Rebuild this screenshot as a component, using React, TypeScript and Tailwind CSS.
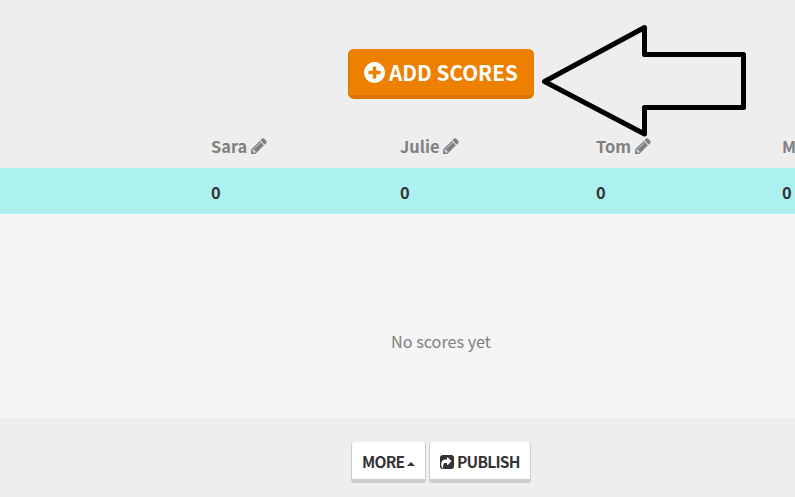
import React from "react";

function Icon({ d, className, box = "128 128 1536 1536" }: { d: string; className: string; box?: string }) {
  return (
    <svg viewBox={box} className={`shrink-0 ${className}`} fill="currentColor" fillRule="evenodd" aria-hidden="true">
      <path d={d} />
    </svg>
  );
}

const PLUS =
  "M1344 960v-128q0-26-19-45t-45-19h-256v-256q0-26-19-45t-45-19h-128q-26 0-45 19t-19 45v256h-256q-26 0-45 19t-19 45v128q0 26 19 45t45 19h256v256q0 26 19 45t45 19h128q26 0 45-19t19-45v-256h256q26 0 45-19t19-45zM1664 896q0 209-103 385.5t-279.5 279.5-385.5 103-385.5-103-279.5-279.5-103-385.5 103-385.5 279.5-279.5 385.5-103 385.5 103 279.5 279.5 103 385.5z";
const PENCIL =
  "M491 1536l91-91-235-235-91 91v107h128v128h107zM1014 608q0-22-22-22-10 0-17 7l-542 542q-7 7-7 17 0 22 22 22 10 0 17-7l542-542q7-7 7-17zM960 416l416 416-832 832h-416v-416zM1643 512q0 53-37 90l-166 166-416-416 166-165q36-38 90-38 53 0 91 38l235 234q37 39 37 91z";
const SHARE =
  "M1005 1197l352-352q19-19 19-45t-19-45l-352-352q-30-31-69-14-40 17-40 59v160q-119 0-216 19.5t-162.5 51-114 79-76.5 95.5-44.5 109-21.5 111.5-5 110.5q0 181 167 404 11 12 25 12 7 0 13-3 22-9 19-33-44-354 62-473 46-52 130-75.5t224-23.5v160q0 42 40 59 12 5 24 5 26 0 45-19zM1664 416v960q0 119-84.5 203.5t-203.5 84.5h-960q-119 0-203.5-84.5t-84.5-203.5v-960q0-119 84.5-203.5t203.5-84.5h960q119 0 203.5 84.5t84.5 203.5z";

const players = ["Sara", "Julie", "Tom", "M"];

export default function App() {
  return (
    <div className="relative flex h-[497px] w-full flex-col overflow-hidden bg-[#eeeeee] font-['Noto_Sans_CJK_SC','Noto_Sans',sans-serif] text-[#333333]">
      <header className="flex h-[126px] shrink-0 items-start pt-[49px] pl-[348px]">
        <button className="flex h-[50px] w-[186px] items-center gap-1 rounded-[6px] border-b-4 border-[#d97500] bg-[#ed8000] pl-4 text-[20.7px] font-bold whitespace-nowrap text-white shadow-[inset_-1px_0_0_#dc7700,inset_1px_0_0_#dc7700]">
          <Icon d={PLUS} className="size-[21px]" />
          <span className="pt-[2px]">ADD SCORES</span>
        </button>
      </header>

      <div className="grid h-[42px] shrink-0 grid-cols-[189px_196px_186px_13px] items-center pb-[2px] pl-[211px] text-[16.4px] font-bold text-[#808080]">
        {players.map((name) => (
          <div key={name} className="flex items-center gap-1 whitespace-nowrap">
            <span>{name}</span>
            {name !== "M" && <Icon d={PENCIL} className="size-4" />}
          </div>
        ))}
      </div>

      <div className="grid h-[46px] shrink-0 grid-cols-[189px_196px_186px_13px] items-center bg-[#adf0f0] pt-[3px] pl-[211px] text-[16.4px] font-bold">
        {players.map((name) => (
          <span key={name}>0</span>
        ))}
      </div>

      <main className="flex h-[203px] shrink-0 items-start bg-[#f5f5f5] pt-[115px] pl-[391px] text-[16.2px] leading-6 text-[#808080]">
        No scores yet
      </main>

      <footer className="flex flex-1 items-start gap-[3px] pt-[25px] pl-[351px] text-[15.5px] font-bold tracking-[-0.75px]">
        <button className="flex h-[41px] w-[75px] items-center gap-[3px] rounded-[3px] border border-t-0 border-b-4 border-[#cccccc] bg-white pt-[2px] pl-[10px] whitespace-nowrap">
          <span>MORE</span>
          <svg viewBox="0 0 8 4" className="mt-[5px] h-1 w-2" fill="currentColor">
            <path d="M0 4 4 0l4 4z" />
          </svg>
        </button>
        <button className="flex h-[41px] w-[102px] items-center gap-[3px] rounded-[3px] border border-t-0 border-b-4 border-[#cccccc] bg-white pt-[2px] pl-[10px] whitespace-nowrap">
          <Icon d={SHARE} className="size-[14px]" />
          <span>PUBLISH</span>
        </button>
      </footer>

      <svg className="absolute top-0 left-[535px] h-[150px] w-[220px]" viewBox="535 0 220 150" fill="none" aria-hidden="true">
        <path d="M544.5 81.5 644.5 27.5V54.5H743.5V107.5H644.5V134Z" stroke="#000" strokeWidth="5" strokeLinejoin="round" />
      </svg>
    </div>
  );
}
